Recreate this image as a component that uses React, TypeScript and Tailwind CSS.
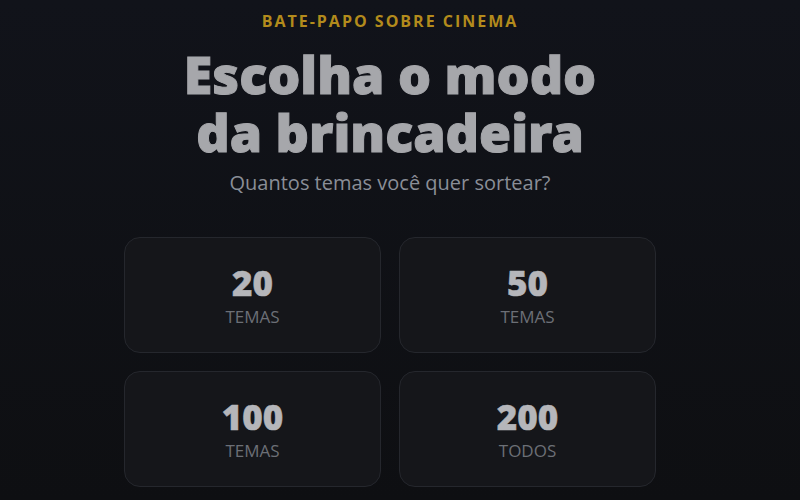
import React from "react";

const cards = [
  { n: "20", l: "TEMAS" },
  { n: "50", l: "TEMAS" },
  { n: "100", l: "TEMAS" },
  { n: "200", l: "TODOS" },
];

export default function App() {
  return (
    <div className="w-[800px] h-[500px] overflow-hidden bg-gradient-to-b from-[#11131a] to-[#0e0f12]">
      <div className="w-[780px] flex flex-col items-center">
        <div className="mt-[11px] text-[16px] font-bold tracking-[0.125em] text-[#b38b1c] leading-[20px] [font-family:'Open_Sans',sans-serif]">
          BATE-PAPO SOBRE CINEMA
        </div>
        <h1 className="mt-[14px] flex flex-col items-center text-center text-[52px] leading-[58px] font-black text-[#a6a7ab] [-webkit-text-stroke:1px_#a6a7ab] [font-family:'Noto_Sans',sans-serif]">
          <span>Escolha o modo</span>
          <span>da brincadeira</span>
        </h1>
        <div className="mt-[9px] text-[20px] leading-[26px] text-[#8a8e97] [font-family:'Open_Sans',sans-serif]">
          Quantos temas você quer sortear?
        </div>
        <div className="mt-[41px] grid grid-cols-2 gap-x-[18px] gap-y-[18px]">
          {cards.map((c) => (
            <div
              key={c.n}
              className="w-[257px] h-[116px] rounded-[16px] border border-[#25272d] bg-[#15161a] flex flex-col items-center pt-[25px]"
            >
              <div className="text-[35px] leading-[40px] font-black text-[#b5b6ba] [-webkit-text-stroke:0.5px_#b5b6ba] [font-family:'Noto_Sans',sans-serif]">
                {c.n}
              </div>
              <div className="mt-[3px] text-[17px] leading-[22px] text-[#6c6f76] [font-family:'Open_Sans',sans-serif]">
                {c.l}
              </div>
            </div>
          ))}
        </div>
      </div>
    </div>
  );
}
